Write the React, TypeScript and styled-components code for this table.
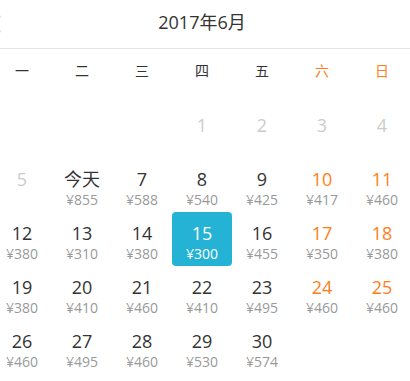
import React from "react";
import styled, { createGlobalStyle } from "styled-components";

const Global = createGlobalStyle`
  html, body { margin: 0; padding: 0; background: #fff; }
  body { font-family: "Open Sans", "Noto Sans CJK SC", sans-serif; overflow: hidden; }
`;

const Calendar = styled.div`
  width: 420px;
  margin-left: -8px;
`;

const Header = styled.div`
  position: relative;
  height: 48px;
  line-height: 44px;
  text-align: center;
  font-size: 18px;
  color: #333;
  border-bottom: 1px solid #e5e5e5;
`;

const PrevArrow = styled.svg`
  position: absolute;
  left: 0;
  top: 14px;
`;

const WeekRow = styled.div`
  display: grid;
  grid-template-columns: repeat(7, 60px);
  height: 42px;
  align-items: center;
`;

const WeekLabel = styled.div<{ $weekend?: boolean }>`
  text-align: center;
  font-size: 14px;
  font-family: "Noto Sans CJK SC", sans-serif;
  color: ${(p) => (p.$weekend ? "#ff7e1c" : "#333")};
`;

const Grid = styled.div`
  display: grid;
  grid-template-columns: repeat(7, 60px);
  grid-auto-rows: 54px;
  margin-top: 13px;
`;

type Tone = "normal" | "weekend" | "past";

const Cell = styled.div<{ $selected?: boolean }>`
  display: flex;
  flex-direction: column;
  align-items: center;
  padding-top: 10px;
  box-sizing: border-box;
  border-radius: 4px;
  background: ${(p) => (p.$selected ? "#24b3d4" : "transparent")};
`;

const Num = styled.div<{ $tone: Tone; $selected?: boolean }>`
  font-size: 18px;
  line-height: 22px;
  font-family: "Open Sans", "Noto Sans CJK SC", sans-serif;
  color: ${(p) =>
    p.$selected ? "#fff" : p.$tone === "weekend" ? "#ff7e1c" : p.$tone === "past" ? "#cccccc" : "#333"};
`;

const Price = styled.div<{ $selected?: boolean }>`
  font-size: 14px;
  line-height: 20px;
  color: ${(p) => (p.$selected ? "#fff" : "#999")};
`;

const weekdays = ["一", "二", "三", "四", "五", "六", "日"];

const prices: Record<number, number> = {
  6: 855, 7: 588, 8: 540, 9: 425, 10: 417, 11: 460,
  12: 380, 13: 310, 14: 380, 15: 300, 16: 455, 17: 350, 18: 380,
  19: 380, 20: 410, 21: 460, 22: 410, 23: 495, 24: 460, 25: 460,
  26: 460, 27: 495, 28: 460, 29: 530, 30: 574,
};

const offset = 3;

export default function App() {
  const cells: React.ReactNode[] = [];
  for (let i = 0; i < offset; i++) cells.push(<div key={`b${i}`} />);
  for (let d = 1; d <= 30; d++) {
    const col = (offset + d - 1) % 7;
    const past = d < 6;
    const tone: Tone = past ? "past" : col >= 5 ? "weekend" : "normal";
    const selected = d === 15;
    cells.push(
      <Cell key={d} $selected={selected}>
        <Num $tone={tone} $selected={selected}>{d === 6 ? "今天" : d}</Num>
        {prices[d] !== undefined && <Price $selected={selected}>¥{prices[d]}</Price>}
      </Cell>
    );
  }
  return (
    <>
      <Global />
      <Calendar>
        <Header>
          <PrevArrow width="12" height="20" viewBox="0 0 12 20">
            <polyline points="9,2 1,10 9,18" fill="none" stroke="#e6e6e6" strokeWidth="2" />
          </PrevArrow>
          2017年6月
        </Header>
        <WeekRow>
          {weekdays.map((w, i) => (
            <WeekLabel key={w} $weekend={i >= 5}>{w}</WeekLabel>
          ))}
        </WeekRow>
        <Grid>{cells}</Grid>
      </Calendar>
    </>
  );
}
